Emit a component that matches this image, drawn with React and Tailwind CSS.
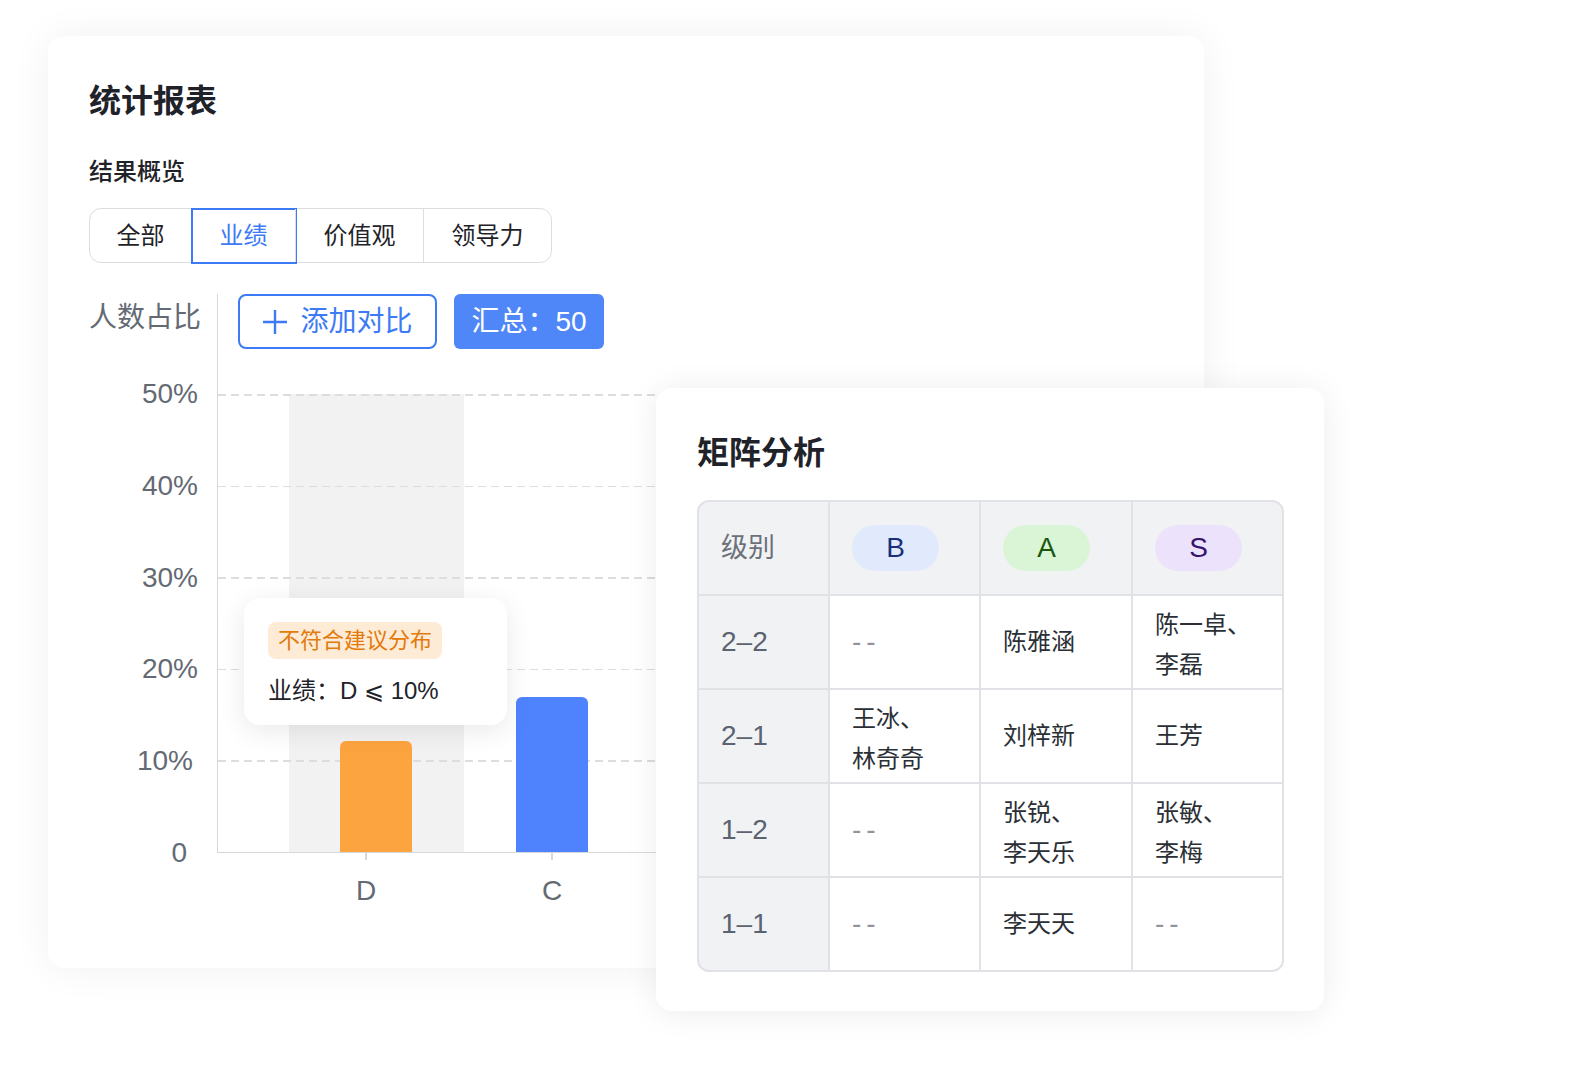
import React from 'react';

const tabs = [
  { name: '全部', w: 'w-[101px]' },
  { name: '业绩', w: 'w-[104px]', active: true },
  { name: '价值观', w: 'w-[128px]' },
  { name: '领导力', w: 'w-[128px]' },
];

// y-axis labels; the narrow ones sit a little further left
const yTicks = [
  { l: '50%', pr: '' },
  { l: '40%', pr: '' },
  { l: '30%', pr: '' },
  { l: '20%', pr: '' },
  { l: '10%', pr: 'pr-[5px]' },
  { l: '0', pr: 'pr-[11px]' },
];

const levels = [
  { key: 'B', pill: 'bg-[#e1eafd] text-[#1b2f78]' },
  { key: 'A', pill: 'bg-[#d9f5d6] text-[#1a560f]' },
  { key: 'S', pill: 'bg-[#ece2fb] text-[#34146c]' },
];

const matrix = [
  { label: '2–2', cells: [null, ['陈雅涵'], ['陈一卓、', '李磊']] },
  { label: '2–1', cells: [['王冰、', '林奇奇'], ['刘梓新'], ['王芳']] },
  { label: '1–2', cells: [null, ['张锐、', '李天乐'], ['张敏、', '李梅']] },
  { label: '1–1', cells: [null, ['李天天'], null] },
];

const PlusIcon = () => (
  <svg width="26" height="26" viewBox="0 0 26 26" fill="none">
    <path d="M13 1v24M1 13h24" stroke="#3d7af5" strokeWidth="2.4" />
  </svg>
);

// dashed grid line of the bar chart
const GridLine = () => (
  <div className="h-[1.5px] w-full bg-[linear-gradient(to_right,#dcdde1_8px,transparent_8px)] bg-[length:13px_1.5px] bg-repeat-x" />
);

const ReportCard = () => (
  <div className="relative ml-[48px] w-[1156px] h-[932px] rounded-[16px] bg-white shadow-[0_0_40px_rgba(0,0,0,0.06)] pl-[41px] pr-[40px] pt-[45px]">
    <h1 className="text-[32px] leading-[40px] font-semibold text-[#1f2329]">统计报表</h1>
    <h2 className="mt-[35px] text-[24px] leading-[32px] font-medium text-[#1f2329]">结果概览</h2>

    {/* segmented tabs */}
    <div className="mt-[20px] flex w-fit h-[55px] rounded-[12px] border-[1.5px] border-[#dcdde1]">
      {tabs.map((t, i) => (
        <div
          key={t.name}
          className={`relative ${t.w} flex items-center justify-center text-[24px] ${i > 0 ? 'border-l-[1.5px] border-[#dcdde1]' : ''} ${t.active ? 'text-[#3d7af5]' : 'text-[#1f2329]'}`}
        >
          {t.active && <div className="absolute -inset-[1.5px] border-2 border-[#3d7af5]" />}
          {t.name}
        </div>
      ))}
    </div>

    {/* bar chart */}
    <div className="mt-[31px] flex">
      <div className="w-[128px] shrink-0 flex flex-col">
        <div className="mt-[6px] text-[28px] leading-[36px] text-[#646a73]">人数占比</div>
        <div className="mt-[58px] h-[459px] flex flex-col justify-between pr-[19px]">
          {yTicks.map((t) => (
            <div key={t.l} className={`h-0 flex items-center justify-end text-[28px] text-[#646a73] ${t.pr}`}>
              {t.l}
            </div>
          ))}
        </div>
      </div>

      <div className="flex-1 flex flex-col">
        <div className="border-l-[1.5px] border-[#d6d7db]">
          <div className="flex gap-[17px] pl-[20px] h-[55px]">
            <button className="w-[199px] h-[55px] flex items-center justify-center gap-[12px] rounded-[8px] border-2 border-[#3d7af5] text-[28px] text-[#3d7af5]">
              <PlusIcon />
              添加对比
            </button>
            <div className="w-[150px] h-[55px] flex items-center justify-center rounded-[6px] bg-[#4f87f9] text-[28px] text-white">
              汇总：50
            </div>
          </div>

          <div className="mt-[45px] h-[459px] grid">
            <div className="col-start-1 row-start-1 pl-[70.5px]">
              <div className="w-[175px] h-full bg-[#f2f2f2]" />
            </div>
            <div className="col-start-1 row-start-1 flex flex-col justify-between">
              <GridLine />
              <GridLine />
              <GridLine />
              <GridLine />
              <GridLine />
              <div className="h-[1.5px] w-full bg-[#d6d7db]" />
            </div>
            <div className="col-start-1 row-start-1 flex items-end pb-[1.5px] pl-[121.5px]">
              <div className="w-[72px] h-[111px] rounded-t-[6px] bg-[#fca43f]" />
              <div className="ml-[104px] w-[72px] h-[155px] rounded-t-[6px] bg-[#4f83fd]" />
            </div>
          </div>
        </div>

        <div className="flex pl-[56px]">
          {['D', 'C'].map((c) => (
            <div key={c} className="w-[186px] flex flex-col items-center">
              <div className="w-[1.5px] h-[7px] bg-[#d6d7db]" />
              <div className="mt-[13px] text-[28px] leading-[36px] text-[#646a73]">{c}</div>
            </div>
          ))}
        </div>
      </div>
    </div>

    {/* hover tooltip over the D column */}
    <div className="absolute left-[196px] top-[562px] w-[263px] h-[127px] rounded-[16px] bg-white shadow-[0_6px_28px_rgba(0,0,0,0.09)] pl-[24px] pt-[24px]">
      <div className="w-fit h-[37px] px-[10px] flex items-center rounded-[8px] bg-[#fdebd6] text-[22px] text-[#e27a0c]">
        不符合建议分布
      </div>
      <div className="mt-[17px] text-[24px] leading-[30px] text-[#1f2329]">业绩：D ⩽ 10%</div>
    </div>
  </div>
);

const MatrixCard = () => (
  <div className="absolute left-[656px] top-[388px] w-[668px] h-[623px] rounded-[16px] bg-white shadow-[0_2px_32px_rgba(0,0,0,0.08)] pl-[41px] pt-[45px]">
    <h1 className="text-[32px] leading-[40px] font-semibold text-[#1f2329]">矩阵分析</h1>

    <div className="mt-[27px] w-[587px] grid grid-cols-[129px_149px_150px_149px] auto-rows-[92px] gap-[2px] rounded-[12px] border-2 border-[#e1e2e6] bg-[#e1e2e6] overflow-hidden">
      <div className="bg-[#f1f2f4] flex items-center pl-[22px] text-[27px] text-[#6b7079]">级别</div>
      {levels.map((lv) => (
        <div key={lv.key} className="bg-[#f1f2f4] flex items-center pl-[22px]">
          <div className={`w-[87px] h-[46px] rounded-full flex items-center justify-center text-[28px] ${lv.pill}`}>
            {lv.key}
          </div>
        </div>
      ))}

      {matrix.map((row) => (
        <React.Fragment key={row.label}>
          <div className="bg-[#f1f2f4] flex items-center pl-[22px] text-[28px] text-[#5b6270]">{row.label}</div>
          {row.cells.map((names, i) => (
            <div key={i} className="bg-white flex items-center pl-[22px]">
              {names ? (
                <div className={`text-[24px] leading-[40px] text-[#2b2f36] ${names.length > 1 ? 'pt-[6px]' : ''}`}>
                  {names.map((n) => (
                    <div key={n}>{n}</div>
                  ))}
                </div>
              ) : (
                <span className="text-[28px] leading-none tracking-[5px] text-[#8f949c]">--</span>
              )}
            </div>
          ))}
        </React.Fragment>
      ))}
    </div>
  </div>
);

export default function App() {
  return (
    <div className="relative w-[1588px] h-[1072px] overflow-hidden bg-white pt-[36px] font-['Liberation_Sans','Noto_Sans_CJK_SC',sans-serif]">
      <ReportCard />
      <MatrixCard />
    </div>
  );
}
